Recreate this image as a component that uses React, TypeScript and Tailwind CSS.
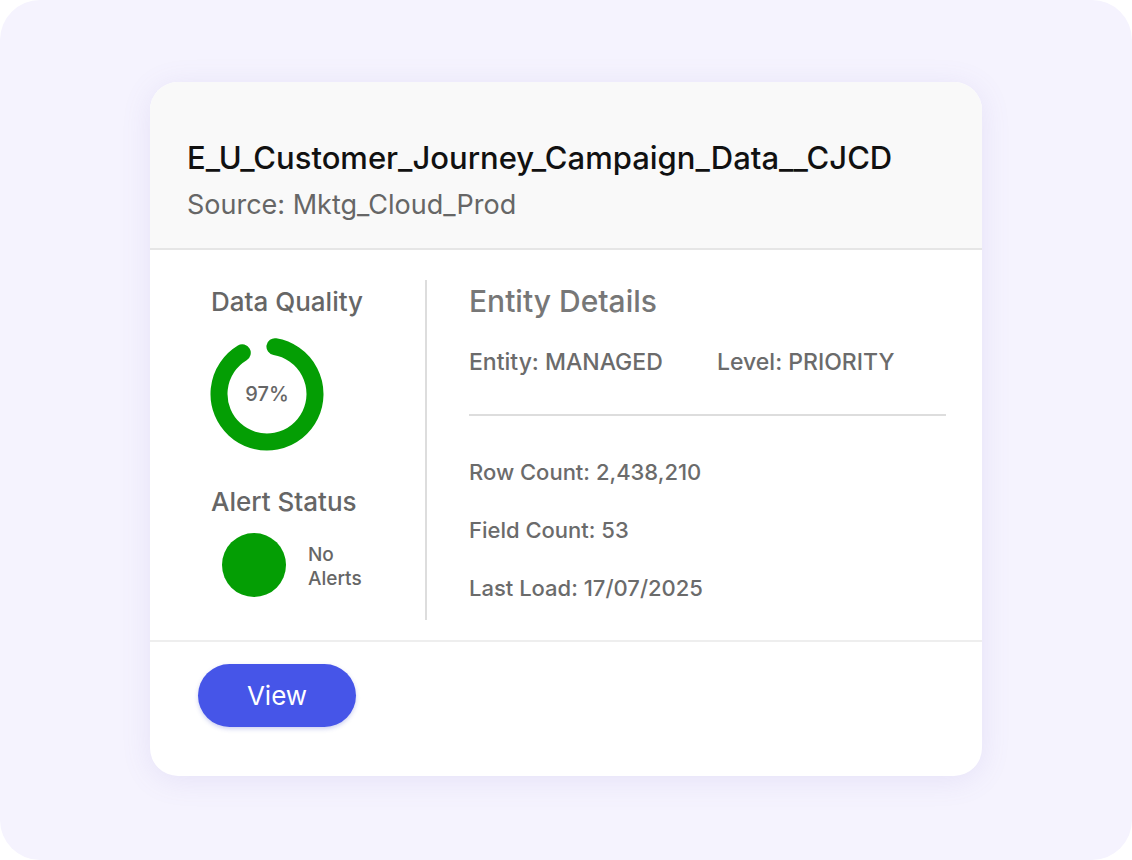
import React from "react";

function Donut() {
  const cx = 60, cy = 60, r = 48;
  const a1 = (9.5 * Math.PI) / 180;
  const a2 = (329 * Math.PI) / 180;
  const x1 = cx + r * Math.sin(a1), y1 = cy - r * Math.cos(a1);
  const x2 = cx + r * Math.sin(a2), y2 = cy - r * Math.cos(a2);
  const d = `M ${x1} ${y1} A ${r} ${r} 0 1 1 ${x2} ${y2}`;
  return (
    <div className="relative w-[120px] h-[120px]">
      <svg width="120" height="120" viewBox="0 0 120 120">
        <path d={d} fill="none" stroke="#049e04" strokeWidth="17" strokeLinecap="round" />
      </svg>
      <div className="absolute inset-0 flex items-center justify-center text-[20px] font-medium text-[#666666]">97%</div>
    </div>
  );
}

export default function App() {
  return (
    <div className="w-[1132px] h-[860px] bg-white" style={{ fontFamily: "Inter, 'Noto Sans', sans-serif" }}>
      <div className="w-full h-full rounded-[40px] bg-[#f5f3fe] pt-[82px] pl-[150px]">
        <div className="w-[832px] h-[694px] rounded-[28px] bg-white overflow-hidden shadow-[0_4px_30px_rgba(120,110,200,0.12)] flex flex-col">
          <div className="h-[168px] bg-[#f9f9f9] border-b-2 border-[#e6e6e6] px-[37px] pt-[58px]">
            <div className="text-[31px] leading-[36px] font-medium text-[#111111] whitespace-nowrap">E_U_Customer_Journey_Campaign_Data__CJCD</div>
            <div className="text-[27px] leading-[34px] text-[#666666] mt-[12px]">Source: Mktg_Cloud_Prod</div>
          </div>
          <div className="h-[392px] border-b-2 border-[#eeeeee] flex pt-[30px] pb-[20px]">
            <div className="w-[275px] pl-[61px] flex flex-col">
              <div className="text-[26px] leading-[30px] font-medium text-[#666666] mt-[7px] whitespace-nowrap">Data Quality</div>
              <div className="ml-[-4px] mt-[17px]"><Donut /></div>
              <div className="text-[26px] leading-[30px] font-medium text-[#666666] mt-[33px] whitespace-nowrap">Alert Status</div>
              <div className="flex items-center mt-[16px] ml-[11px]">
                <div className="w-[64px] h-[64px] rounded-full bg-[#049e04]" />
                <div className="ml-[22px] mt-[4px] text-[19px] leading-[24px] font-medium text-[#666666]">No<br />Alerts</div>
              </div>
            </div>
            <div className="flex-1 border-l-2 border-[#dddddd] pl-[42px] pr-[36px]">
              <div className="text-[30px] leading-[34px] font-medium text-[#777777] mt-[4px] whitespace-nowrap">Entity Details</div>
              <div className="flex text-[23px] leading-[28px] font-medium text-[#6b6b6b] mt-[30px] whitespace-nowrap">
                <span className="w-[248px]">Entity: MANAGED</span>
                <span>Level: PRIORITY</span>
              </div>
              <div className="h-[2px] bg-[#dddddd] mt-[38px]" />
              <div className="text-[22px] leading-[28px] font-medium text-[#6b6b6b] mt-[42px] flex flex-col gap-[30px] whitespace-nowrap">
                <span>Row Count: 2,438,210</span>
                <span>Field Count: 53</span>
                <span>Last Load: 17/07/2025</span>
              </div>
            </div>
          </div>
          <div className="pt-[22px] pl-[48px]">
            <button className="w-[158px] h-[63px] rounded-full bg-[#4655e8] text-white text-[26px] shadow-[0_2px_4px_rgba(60,70,200,0.25)]">View</button>
          </div>
        </div>
      </div>
    </div>
  );
}
